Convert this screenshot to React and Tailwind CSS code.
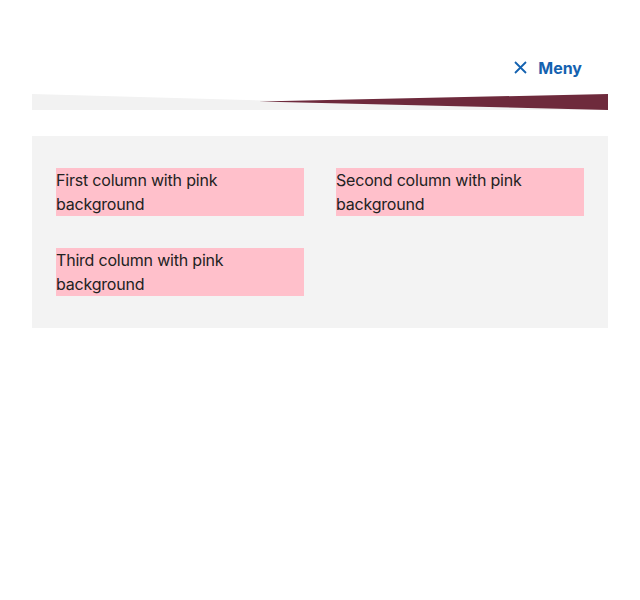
import React from "react";

export default function App() {
  const cells = [
    "First column with pink background",
    "Second column with pink background",
    "Third column with pink background",
  ];
  return (
    <div className="min-h-[600px] bg-white px-8 font-['Inter',sans-serif] text-[#222]">
      <header className="flex h-[94px] items-center justify-end pr-[26px] pt-[41px]">
        <button className="flex items-center gap-[11px] text-[16px] font-bold text-[#1462b0]">
          <svg width="13" height="13" viewBox="0 0 13 13">
            <path d="M1 1 L12 12 M12 1 L1 12" stroke="#1462b0" strokeWidth="1.8" fill="none" />
          </svg>
          <span>Meny</span>
        </button>
      </header>
      <svg className="block h-4 w-full" viewBox="0 0 576 16" preserveAspectRatio="none">
        <polygon points="0,0 576,16 0,16" fill="#f2f2f2" />
        <polygon points="227,7.5 576,0 576,16" fill="#6e2a3c" />
      </svg>
      <section className="mt-[26px] grid grid-cols-2 gap-8 bg-[#f3f3f3] px-6 py-8">
        {cells.map((t) => (
          <div key={t} className="bg-[#ffc0cb] text-base leading-6 tracking-[-0.2px]">
            {t}
          </div>
        ))}
      </section>
    </div>
  );
}
